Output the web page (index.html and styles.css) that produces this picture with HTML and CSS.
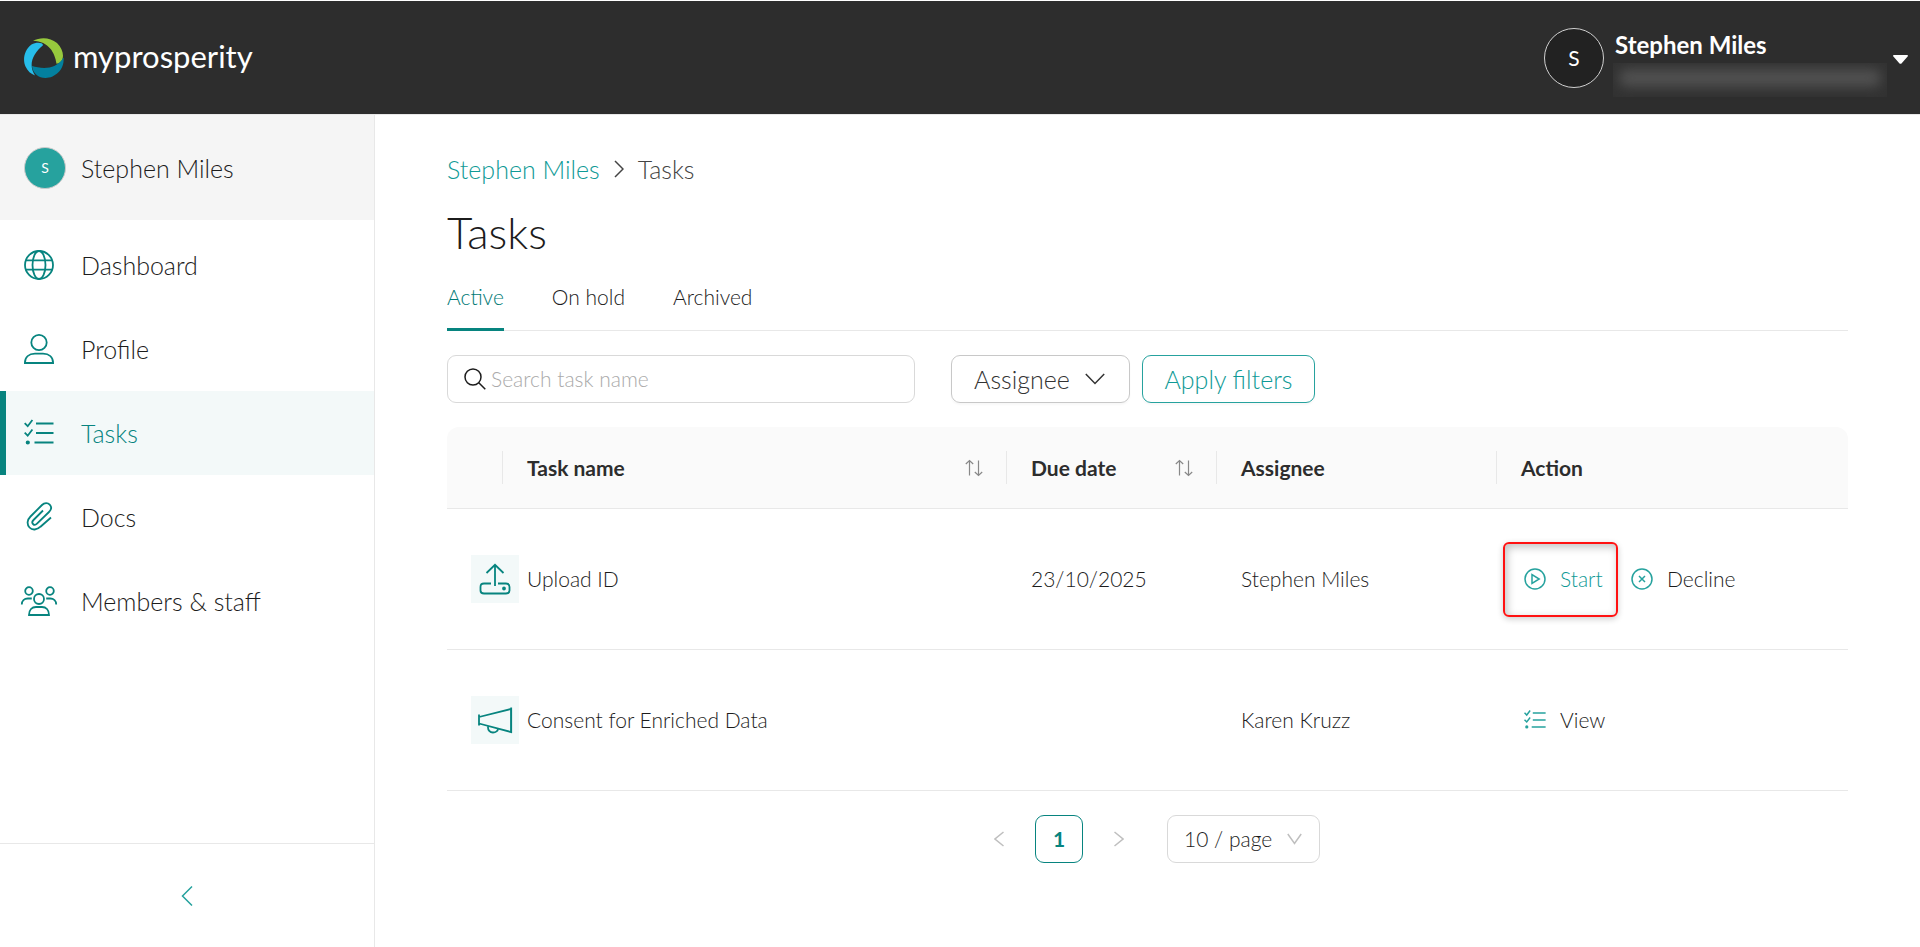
FILE: index.html
```html
<!DOCTYPE html>
<html lang="en">
<head>
	<meta charset="UTF-8">
	<title>Tasks - myprosperity</title>
	<link rel="stylesheet" href="styles.css">
</head>
<body>
	<!-- shared icons -->
	<svg class="sprite" aria-hidden="true">
		<symbol id="i-tasks" viewBox="0 0 30 30">
			<path d="M.7 5.200l3 3L8.400 2M.7 14.700l3 3 4.700-6.200M12 5.500h17.500M12 15h17.500M10.500 24.500h19"/>
			<circle cx="3.800" cy="24.500" r="1.200" fill="currentColor"/>
		</symbol>
		<symbol id="i-sort" viewBox="0 0 18 18">
			<path d="M4.500 16.500V1.500M.8 5l3.700-3.500L8.200 5M13.500 1.500v15M9.800 13l3.700 3.500 3.700-3.500"/>
		</symbol>
	</svg>

	<header class="header">
		<a href="#" class="logo">
			<svg width="40" height="40" viewBox="0 0 40 40" aria-hidden="true">
				<path fill="#97c93d" d="M9 2.800C16-1 26-1 33 5c5 5 7 11 5.500 16-.8 2.600-3 4.600-6 4.700C31 15 25 3.500 9 2.800z"/>
				<path fill="#27bdea" d="M19 7.200C18.800 4.300 12 4 7.500 6.500 0 12-1.500 22 1.500 28.500c2 4.500 5.500 7.500 9.500 9C4 27 8.500 16 19 7.200z"/>
				<path fill="#03809f" d="M8 28c9 2.600 24 4.500 31.500-8.500C40.500 28 36 35 28.500 38.500 19 42.500 9 38 8 28z"/>
			</svg>
			<span>myprosperity</span>
		</a>
		<div class="account">
			<span class="account-avatar">S</span>
			<div class="account-text">
				<strong>Stephen Miles</strong>
				<div class="account-email"></div>
			</div>
			<button class="account-toggle" aria-label="Account menu">
				<svg width="15" height="9" viewBox="0 0 15 9"><path fill="#fff" d="M1 0h13c1 0 1.300 1 .6 1.600L8.500 8.400c-.6.600-1.400.6-2 0L.4 1.600C-.3 1 0 0 1 0z"/></svg>
			</button>
		</div>
	</header>

	<div class="layout">
		<aside class="sidebar">
			<a href="#" class="sidebar-user"><span class="avatar">S</span>Stephen Miles</a>
			<nav>
				<a href="#">
					<svg width="40" height="40" viewBox="-5 -5 40 40"><circle cx="15" cy="15" r="14"/><ellipse cx="15" cy="15" rx="6.500" ry="14"/><path d="M2 10.300h26M2 19.700h26"/></svg>
					Dashboard
				</a>
				<a href="#">
					<svg width="40" height="40" viewBox="-5 -5 40 40"><circle cx="15" cy="8.500" r="7.700"/><path d="M.9 29C.9 23 5 19.600 11 19.600h8c6 0 10.100 3.400 10.100 9.400z"/></svg>
					Profile
				</a>
				<a href="#" class="active">
					<svg width="40" height="40" viewBox="-5 -5 40 40"><use href="#i-tasks" width="30" height="30"/></svg>
					Tasks
				</a>
				<a href="#">
					<svg width="40" height="40" viewBox="-5 -5 40 40"><path d="M19 8.500L9.500 18c-1.500 1.500-1.500 3 -.5 4s2.700 1 4-.3L25 10c2.500-2.500 2.500-5.500 .7-7.400S20.500.500 18 3L6.500 14.500c-3.500 3.500-3.800 8-1 11s7.500 2.600 11-.8L27 15.500"/></svg>
					Docs
				</a>
				<a href="#">
					<svg width="40" height="40" viewBox="-2 -5 40 40"><circle cx="8" cy="5" r="3.800"/><circle cx="29" cy="5" r="3.800"/><circle cx="18" cy="13" r="5"/><path d="M.8 18.500c0-3.500 2.500-6 6-6h4M35.200 18.500c0-3.500-2.500-6-6-6h-4M8 29c0-5 3-8 7-8h6c4 0 7 3 7 8z"/></svg>
					Members &amp; staff
				</a>
			</nav>
			<button class="collapse" aria-label="Collapse menu">
				<svg width="12" height="20" viewBox="0 0 12 20"><path d="M11 .5L1.500 10l9.500 9.500"/></svg>
			</button>
		</aside>

		<main>
			<div class="breadcrumb">
				<a href="#">Stephen Miles</a>
				<svg width="10" height="18" viewBox="0 0 10 18"><path d="M1 1l8 8-8 8"/></svg>
				<span>Tasks</span>
			</div>
			<h1>Tasks</h1>
			<div class="tabs">
				<a href="#" class="active">Active</a>
				<a href="#">On hold</a>
				<a href="#">Archived</a>
			</div>

			<form class="filters">
				<label class="search">
					<svg width="22" height="22" viewBox="0 0 22 22"><circle cx="9" cy="9" r="8"/><path d="M14.800 14.800l6.500 6.500"/></svg>
					<input type="text" placeholder="Search task name" aria-label="Search task name">
				</label>
				<span class="select assignee">
					<select aria-label="Assignee"><option>Assignee</option></select>
					<svg width="20" height="12" viewBox="0 0 20 12"><path d="M.8 1L10 10.500 19.200 1"/></svg>
				</span>
				<button type="button" class="apply">Apply filters</button>
			</form>

			<table>
				<colgroup>
					<col class="col-icon"><col><col class="col-due"><col class="col-assignee"><col class="col-action">
				</colgroup>
				<thead>
					<tr>
						<th></th>
						<th><div>Task name <svg width="18" height="18"><use href="#i-sort"/></svg></div></th>
						<th><div>Due date <svg width="18" height="18"><use href="#i-sort"/></svg></div></th>
						<th>Assignee</th>
						<th>Action</th>
					</tr>
				</thead>
				<tbody>
					<tr>
						<td>
							<span class="tile"><svg width="36" height="36" viewBox="0 0 36 36"><path d="M18 25V4M9.500 12L18 3.800l8.500 8.200M14 22.500H7c-2.500 0-3.500 1.300-3.500 3.500v3.500c0 2.200 1 3 3.500 3h22c2.500 0 3.500-.8 3.500-3V26c0-2.200-1-3.500-3.500-3.500h-8"/><circle cx="27" cy="27.500" r="1" fill="currentColor"/></svg></span>
						</td>
						<td>Upload ID</td>
						<td>23/10/2025</td>
						<td>Stephen Miles</td>
						<td>
							<div class="actions">
								<a href="#" class="start">
									<svg width="22" height="22" viewBox="0 0 22 22"><circle cx="11" cy="11" r="10"/><path d="M8 6.500v9l7.200-4.500z"/></svg>
									Start
								</a>
								<a href="#">
									<svg width="22" height="22" viewBox="0 0 22 22"><circle cx="11" cy="11" r="10"/><path d="M8 8l6 6M14 8l-6 6"/></svg>
									Decline
								</a>
							</div>
						</td>
					</tr>
					<tr>
						<td>
							<span class="tile"><svg width="36" height="36" viewBox="0 0 36 36"><path d="M2 12.500v11M2 15l32-8v23L2 21.500M34.200 5.500v25.500M11 24.500c-.3 3.500 2 6 5 6 2.800 0 5-1.600 5-4"/></svg></span>
						</td>
						<td>Consent for Enriched Data</td>
						<td></td>
						<td>Karen Kruzz</td>
						<td>
							<div class="actions">
								<a href="#">
									<svg width="22" height="22" viewBox="0 0 30 30" class="view-icon"><use href="#i-tasks" width="30" height="30"/></svg>
									View
								</a>
							</div>
						</td>
					</tr>
				</tbody>
			</table>

			<div class="pagination">
				<button aria-label="Previous page"><svg width="10" height="16" viewBox="0 0 10 16"><path d="M9.500 1L1 8l8.500 7"/></svg></button>
				<button class="current">1</button>
				<button aria-label="Next page"><svg width="10" height="16" viewBox="0 0 10 16"><path d="M.5 1L9 8l-8.500 7"/></svg></button>
				<span class="select page-size">
					<select aria-label="Page size"><option>10 / page</option></select>
					<svg width="15" height="12" viewBox="0 0 15 12"><path d="M.8 1l6.700 9.500L14.200 1"/></svg>
				</span>
			</div>
		</main>
	</div>
</body>
</html>
```
FILE: styles.css
```css
* {
	box-sizing: border-box;
	margin: 0;
	padding: 0;
}
body {
	display: flex;
	flex-direction: column;
	min-height: 100vh;
	background-color: #fff;
	color: #1c1c1c;
	font-family: Lato, "Liberation Sans", sans-serif;
	font-size: 21px;
	font-weight: 300;
	line-height: 28px;
}
a {
	color: inherit;
	text-decoration: none;
}
button, input, select {
	font: inherit;
	color: inherit;
	background: none;
	border: 0;
}
svg {
	flex: none;
	fill: none;
	stroke: currentColor;
	stroke-width: 1.5;
}
.sprite {
	position: absolute;
	width: 0;
	height: 0;
}

/* header */
.header {
	display: flex;
	justify-content: space-between;
	align-items: center;
	height: 115px;
	padding: 0 12px 0 24px;
	border-top: 1px solid #fff;
	border-bottom: 1px solid #e8e8e8;
	background-color: #2d2d2d;
	color: #fff;
}
.header svg {
	stroke: none;
}
.logo {
	display: flex;
	align-items: center;
	gap: 9px;
	font-size: 31px;
	font-weight: 400;
	line-height: 40px;
}
.logo span {
	padding-bottom: 4px;
}
.account {
	display: flex;
	align-items: center;
}
.account-avatar {
	width: 60px;
	height: 60px;
	margin-right: 9px;
	border: 1px solid #d0d0d0;
	border-radius: 50%;
	background-color: #222;
	font-weight: 400;
	line-height: 58px;
	text-align: center;
}
.account-text {
	width: 274px;
	padding-top: 8px;
}
.account-text strong {
	display: block;
	padding-left: 2px;
	font-size: 24px;
	font-weight: 700;
	line-height: 36px;
}
.account-email {
	height: 34px;
	padding: 6px;
	overflow: hidden;
	background-color: #323232;
}
.account-email::before {
	content: "";
	display: block;
	height: 18px;
	border-radius: 8px;
	background-color: #505050;
	filter: blur(6px);
}
.account-toggle {
	display: flex;
	margin: 4px 0 0 6px;
}

/* sidebar */
.layout {
	display: flex;
	flex: 1;
}
.sidebar {
	display: flex;
	flex: none;
	flex-direction: column;
	width: 375px;
	border-right: 1px solid #e8e8e8;
	font-size: 25px;
}
.sidebar-user {
	display: flex;
	align-items: center;
	gap: 15px;
	height: 105px;
	padding-left: 24px;
	background-color: #f5f5f5;
}
.avatar {
	width: 42px;
	height: 42px;
	border: 1px solid #ccc;
	border-radius: 50%;
	background-color: #26a29e;
	color: #fff;
	font-size: 14px;
	font-weight: 400;
	line-height: 40px;
	text-align: center;
}
.sidebar nav {
	flex: 1;
	padding-top: 3px;
}
.sidebar nav a {
	display: flex;
	align-items: center;
	gap: 22px;
	height: 84px;
	padding-left: 19px;
}
.sidebar nav svg {
	color: #07847f;
	stroke-width: 1.8;
}
.sidebar nav .active {
	padding-left: 13px;
	border-left: 6px solid #07847f;
	background-color: #f3f9f9;
	color: #07847f;
}
.collapse {
	display: flex;
	justify-content: center;
	align-items: center;
	height: 104px;
	border-top: 1px solid #e8e8e8;
	color: #26a29e;
}

/* content */
main {
	flex: 1;
	padding: 36px 72px 24px;
}
.breadcrumb {
	display: flex;
	align-items: center;
	gap: 14px;
	color: #444;
	font-size: 25px;
	line-height: 36px;
}
.breadcrumb a {
	color: #0f9a96;
}
h1 {
	margin: 17px 0 11px;
	font-size: 44px;
	font-weight: 300;
	line-height: 56px;
}
.tabs {
	display: flex;
	gap: 48px;
	height: 60px;
	box-shadow: inset 0 -1px #e8e8e8;
	line-height: 52px;
}
.tabs .active {
	border-bottom: 3px solid #07847f;
	color: #007a75;
}
.filters {
	display: flex;
	align-items: center;
	margin: 24px 0;
}
.search {
	display: flex;
	align-items: center;
	gap: 5px;
	width: 468px;
	height: 48px;
	margin-right: 36px;
	padding: 0 16px;
	border: 1px solid #d9d9d9;
	border-radius: 9px;
}
.search input {
	flex: 1;
	min-width: 0;
	outline: 0;
}
.search input::placeholder {
	color: #aaa;
}
.select {
	position: relative;
	display: flex;
}
.select select {
	width: 100%;
	height: 48px;
	border: 1px solid #d9d9d9;
	border-radius: 9px;
	line-height: 36px;
	appearance: none;
}
.select svg {
	position: absolute;
	top: 18px;
	pointer-events: none;
}
.assignee {
	width: 179px;
	margin-right: 12px;
	color: #333;
	font-size: 25px;
}
.assignee select {
	padding-left: 22px;
	border-color: #c8c8c8;
	box-shadow: 0 2px 2px rgba(0,0,0,.03);
}
.assignee svg {
	right: 25px;
}
.apply {
	width: 173px;
	height: 48px;
	border: 1px solid #26a29e;
	border-radius: 9px;
	box-shadow: 0 2px 2px rgba(0,0,0,.03);
	color: #0f9a96;
	font-size: 25px;
}

/* table */
table {
	width: 100%;
	table-layout: fixed;
	border-collapse: separate;
	border-spacing: 0;
}
.col-icon {
	width: 56px;
}
.col-due {
	width: 210px;
}
.col-assignee {
	width: 280px;
}
.col-action {
	width: 351px;
}
th {
	position: relative;
	height: 82px;
	padding: 0 24px;
	border-bottom: 1px solid #e8e8e8;
	background-color: #fafafa;
	color: #2d2d2d;
	font-weight: 700;
	text-align: left;
}
th:first-child {
	border-top-left-radius: 12px;
}
th:last-child {
	border-top-right-radius: 12px;
}
th:not(:last-child)::after {
	content: "";
	position: absolute;
	top: 24px;
	right: 0;
	width: 1px;
	height: 33px;
	background-color: #e8e8e8;
}
th div {
	display: flex;
	justify-content: space-between;
	align-items: center;
}
th svg {
	color: #888;
	stroke-width: 1.2;
}
td {
	height: 141px;
	padding: 0 24px;
	border-bottom: 1px solid #e8e8e8;
}
.tile {
	display: flex;
	justify-content: center;
	align-items: center;
	width: 48px;
	height: 48px;
	background-color: #f3f9f9;
	color: #07847f;
}
.tile svg {
	stroke-width: 1.8;
}
.actions {
	display: flex;
	gap: 22px;
}
.actions a {
	position: relative;
	display: flex;
	align-items: center;
	gap: 14px;
	padding-left: 3px;
}
.actions svg {
	color: #26a29e;
}
.actions .view-icon {
	stroke-width: 2;
}
.actions .start {
	min-width: 85px;
	color: #0f9a96;
}
/* highlight box round the start link */
.start::after {
	content: "";
	position: absolute;
	top: -23px;
	right: -12px;
	bottom: -24px;
	left: -18px;
	border: 2px solid #f11;
	border-radius: 6px;
	box-shadow: 0 2px 6px rgba(0,0,0,.2), inset 2px 3px 8px rgba(0,0,0,.25);
	pointer-events: none;
}

/* pagination */
.pagination {
	display: flex;
	justify-content: center;
	gap: 12px;
	margin-top: 24px;
}
.pagination button {
	display: flex;
	justify-content: center;
	align-items: center;
	width: 48px;
	height: 48px;
	border-radius: 9px;
	color: #bfbfbf;
}
.pagination .current {
	border: 1px solid #07847f;
	color: #07847f;
	font-weight: 700;
}
.page-size {
	width: 153px;
	margin-left: 12px;
}
.page-size select {
	padding-left: 16px;
}
.page-size svg {
	right: 18px;
	color: #bfbfbf;
}
```
